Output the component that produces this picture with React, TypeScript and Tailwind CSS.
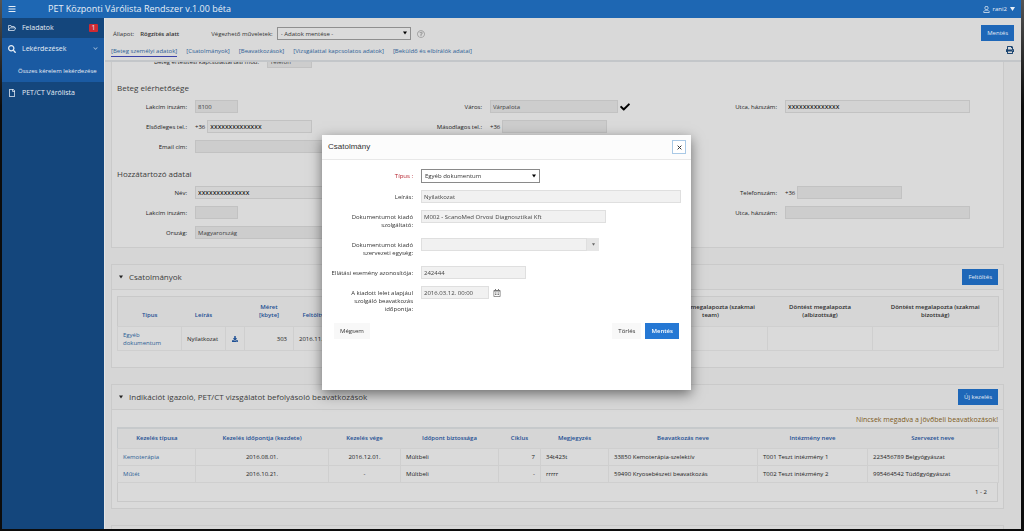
import type { ReactNode } from 'react'
import {
  FaBars,
  FaCheck,
  FaChevronDown,
  FaDownload,
  FaPrint,
  FaRegCalendarAlt,
  FaRegFile,
  FaRegFolderOpen,
  FaRegQuestionCircle,
  FaRegUser,
  FaSearch,
} from 'react-icons/fa'

/**
 * PET waiting list — request details page with the attachment dialog open.
 *
 * The page behind the dialog is painted in its dimmed colours, so there is no separate backdrop.
 */

const MASKED = 'xxxxxxxxxxxxxx'

const TABS = [
  '[Beteg személyi adatok]',
  '[Csatolmányok]',
  '[Beavatkozások]',
  '[Vizsgálattal kapcsolatos adatok]',
  '[Beküldő és elbírálók adatai]',
]

interface Column {
  label: string
  width: string
  plain?: boolean
}

const ATTACHMENT_COLUMNS: Column[] = [
  { label: 'Típus', width: 'w-[64px]' },
  { label: 'Leírás', width: 'w-[44px]' },
  { label: '', width: 'w-[19px]' },
  { label: 'Méret [kbyte]', width: 'w-[49px]' },
  { label: 'Feltöltve', width: 'w-[43px]' },
  { label: 'Feltöltötte', width: 'w-[317px]' },
  { label: 'Döntést megalapozta (szakmai team)', width: 'w-[114px]', plain: true },
  { label: 'Döntést megalapozta (albizottság)', width: 'w-[105px]', plain: true },
  { label: 'Döntést megalapozta (szakmai bizottság)', width: 'w-[126px]', plain: true },
]

const TREATMENT_COLUMNS: Column[] = [
  { label: 'Kezelés típusa', width: 'w-[78px]' },
  { label: 'Kezelés időpontja (kezdete)', width: 'w-[133px]' },
  { label: 'Kezelés vége', width: 'w-[72px]' },
  { label: 'Időpont biztossága', width: 'w-[98px]' },
  { label: 'Ciklus', width: 'w-[42px]' },
  { label: 'Megjegyzés', width: 'w-[68px]' },
  { label: 'Beavatkozás neve', width: 'w-[149px]' },
  { label: 'Intézmény neve', width: 'w-[110px]' },
  { label: 'Szervezet neve', width: 'w-[131px]' },
]

const TREATMENTS = [
  {
    type: 'Kemoterápia',
    start: '2016.08.01.',
    end: '2016.12.01.',
    certainty: 'Múltbeli',
    cycle: '7',
    note: '34t423t',
    name: '33850 Kemoterápia-szelektív',
    institute: 'T001 Teszt intézmény 1',
    organization: '223456789 Belgyógyászat',
  },
  {
    type: 'Műtét',
    start: '2016.10.21.',
    end: '-',
    certainty: 'Múltbeli',
    cycle: '-',
    note: 'rrrrr',
    name: '59490 Kryosebészeti beavatkozás',
    institute: 'T002 Teszt intézmény 2',
    organization: '995464542 Tüdőgyógyászat',
  },
]

const fieldClass = 'h-[13px] border border-[#c2c2c2] bg-[#cdcdcd] px-[2px] text-[#404040]'
const maskedClass = 'h-[13px] border border-[#c2c2c2] bg-[#d3d3d3] px-[2px] text-[7px] text-black'
const dialogFieldClass = 'h-[13px] border border-[#dfdfdf] bg-[#f1f1f1] px-[2px] text-[#444]'
const primaryClass = 'h-4 shrink-0 bg-[#1e67b8] px-[6px] text-[#e3ebf4]'

function Caret({ className }: { className: string }) {
  return (
    <svg viewBox="0 0 10 8" className={className} aria-hidden="true">
      <path d="M0 0h10L5 8z" fill="currentColor" />
    </svg>
  )
}

/** Label and control in one column of the patient form. */
function Field({ id, label, children }: { id: string; label: string; children: ReactNode }) {
  return (
    <div className="flex h-[13px] items-center gap-2">
      <label htmlFor={id} className="w-[75px] shrink-0 text-right whitespace-nowrap">
        {label}
      </label>
      <div className="flex min-w-0 flex-1 items-center gap-[2px]">{children}</div>
    </div>
  )
}

interface DialogFieldProps {
  id: string
  label: string
  required?: boolean
  children: ReactNode
}

function DialogField({ id, label, required, children }: DialogFieldProps) {
  return (
    <div className="flex items-start gap-2">
      <label
        htmlFor={id}
        className={`${required ? 'text-[#b5202c]' : ''} w-[84px] shrink-0 pt-[3px] pb-[2px] text-right`}
      >
        {label}
      </label>
      <div className="flex min-w-0 flex-1 items-center">{children}</div>
    </div>
  )
}

function TableHead({ columns }: { columns: Column[] }) {
  return (
    <thead>
      <tr className="bg-[#d6d6d6]">
        {columns.map(({ label, width, plain }, idx) => (
          <th
            key={idx}
            className={`${width} ${plain ? 'text-[#2c2c2c]' : 'text-[#1d4f94]'} px-2 text-center font-semibold`}
          >
            {label}
          </th>
        ))}
      </tr>
    </thead>
  )
}

function Region({ title, action, children }: { title: string; action: string; children: ReactNode }) {
  return (
    <section className="shrink-0 border border-[#cacaca] bg-[#dadada]">
      <header className="flex h-[25px] items-center gap-[6px] border-b border-[#cacaca] bg-[#d7d7d7] pr-[5px] pl-[7px]">
        <Caret className="h-1 w-1 text-[#222]" />
        <h2 className="flex-1 text-[8px] text-[#3c3c3c]">{title}</h2>
        <button type="button" className={primaryClass}>
          {action}
        </button>
      </header>
      {children}
    </section>
  )
}

function Sidebar() {
  return (
    <nav className="w-[102px] shrink-0 bg-[#14467c] text-[7px] font-medium text-[#e6edf5]">
      <a href="#feladatok" className="flex h-5 items-center gap-[6px] px-[6px]">
        <FaRegFolderOpen className="size-2" />
        <span className="flex-1">Feladatok</span>
        <span className="flex h-2 w-[9px] items-center justify-center rounded-[1px] bg-[#cf2a32] text-[7px]">
          1
        </span>
      </a>
      <div className="bg-[#1a5aa2]">
        <a href="#lekerdezesek" className="flex h-[21px] items-center gap-[6px] px-[6px]">
          <FaSearch className="size-2" />
          <span className="flex-1">Lekérdezések</span>
          <FaChevronDown className="size-[5px] text-[#9db9d8]" />
        </a>
        <a href="#osszes" className="flex h-[23px] items-center pl-4 text-[6px] font-normal whitespace-nowrap">
          Összes kérelem lekérdezése
        </a>
      </div>
      <a href="#varolista" className="flex h-[22px] items-center gap-[6px] px-[6px]">
        <FaRegFile className="size-2" />
        PET/CT Várólista
      </a>
    </nav>
  )
}

function Toolbar() {
  return (
    <div className="flex h-[44px] shrink-0 justify-between border-b-2 border-[#c3c6c9] bg-[#d9d9d9] pr-[7px] pl-[6px]">
      <div className="flex flex-col gap-[6px] pt-[9px]">
        <div className="flex h-[13px] items-center text-[#333]">
          <span className="mr-[6px] ml-[2px]">Állapot:</span>
          <strong className="mr-8 font-semibold">Rögzítés alatt</strong>
          <label htmlFor="action" className="mr-1">
            Végezhető műveletek:
          </label>
          <div className="relative mr-[6px]">
            <select
              id="action"
              className="block h-[13px] w-[134px] appearance-none border border-[#8f8f8f] bg-[#dbdbdb] px-[3px]"
            >
              <option>- Adatok mentése -</option>
            </select>
            <Caret className="pointer-events-none absolute top-[4px] right-1 h-1 w-[4px] text-black" />
          </div>
          <FaRegQuestionCircle className="size-2 text-[#9a9a9a]" />
        </div>
        <div className="flex gap-[9px] text-[#2d5f96]">
          {TABS.map((tab, idx) => (
            <a
              key={tab}
              href="#"
              className={idx === 0 ? 'border-b border-[#3a42a8] leading-[10px]' : 'leading-[10px]'}
            >
              {tab}
            </a>
          ))}
        </div>
      </div>
      <div className="flex flex-col items-end gap-[5px] pt-[7px]">
        <button type="button" className={primaryClass}>
          Mentés
        </button>
        <button type="button" aria-label="Nyomtatás">
          <FaPrint className="size-2 text-[#1d4672]" />
        </button>
      </div>
    </div>
  )
}

function PatientForm() {
  return (
    <section className="-mt-[7px] flex h-[193px] shrink-0 flex-col border border-t-0 border-[#cacaca] bg-[#dadada] pr-[6px]">
      <div className="flex items-center gap-2">
        <label htmlFor="contact" className="w-[147px] text-right whitespace-nowrap">
          Beteg értesítési kapcsolattartási mód:
        </label>
        <input id="contact" readOnly defaultValue="Telefon" className={`${fieldClass} w-[45px]`} />
      </div>

      <h2 className="mt-[14px] pl-[5px] text-[8px] leading-3 text-[#3c3c3c]">Beteg elérhetősége</h2>
      <div className="mt-[6px] grid grid-cols-3 gap-y-[7px]">
        <Field id="zip" label="Lakcím irszám:">
          <input id="zip" readOnly defaultValue="8100" className={`${fieldClass} w-[43px]`} />
        </Field>
        <Field id="city" label="Város:">
          <input id="city" readOnly defaultValue="Várpalota" className={`${fieldClass} w-32`} />
          <FaCheck className="size-[10px] text-black" />
        </Field>
        <Field id="street" label="Utca, házszám:">
          <input id="street" readOnly defaultValue={MASKED} className={`${maskedClass} w-[185px]`} />
        </Field>
        <Field id="phone" label="Elsődleges tel.:">
          +36
          <input id="phone" readOnly defaultValue={MASKED} className={`${maskedClass} w-[105px]`} />
        </Field>
        <Field id="phone2" label="Másodlagos tel.:">
          +36
          <input id="phone2" readOnly className={`${fieldClass} w-[105px]`} />
        </Field>
        <div />
        <Field id="email" label="Email cím:">
          <input id="email" readOnly className={`${fieldClass} w-[185px]`} />
        </Field>
      </div>

      <h2 className="mt-[15px] pl-[5px] text-[8px] leading-3 text-[#3c3c3c]">Hozzátartozó adatai</h2>
      <div className="mt-[6px] grid grid-cols-3 gap-y-[7px]">
        <Field id="relative" label="Név:">
          <input id="relative" readOnly defaultValue={MASKED} className={`${maskedClass} w-[185px]`} />
        </Field>
        <div />
        <Field id="relative-phone" label="Telefonszám:">
          +36
          <input id="relative-phone" readOnly className={`${fieldClass} w-[105px]`} />
        </Field>
        <Field id="relative-zip" label="Lakcím irszám:">
          <input id="relative-zip" readOnly className={`${fieldClass} w-[43px]`} />
        </Field>
        <div />
        <Field id="relative-street" label="Utca, házszám:">
          <input id="relative-street" readOnly className={`${fieldClass} w-[185px]`} />
        </Field>
        <Field id="country" label="Ország:">
          <input id="country" readOnly defaultValue="Magyarország" className={`${fieldClass} w-[185px]`} />
        </Field>
      </div>
    </section>
  )
}

function Attachments() {
  return (
    <Region title="Csatolmányok" action="Feltöltés">
      <div className="px-[5px] pt-[6px] pb-4">
        <table className="w-full table-fixed border border-[#c9c9c9] leading-2 [&_td]:border [&_td]:border-[#cfcfcf] [&_th]:h-[30px] [&_th]:pb-[7px] [&_th]:align-bottom">
          <TableHead columns={ATTACHMENT_COLUMNS} />
          <tbody>
            <tr className="h-6">
              <td className="px-[5px] text-[#2d5f96]">
                <a href="#">Egyéb dokumentum</a>
              </td>
              <td className="px-[5px]">Nyilatkozat</td>
              <td>
                <button type="button" aria-label="Letöltés" className="mx-auto block">
                  <FaDownload className="size-[6px] text-[#1d4f94]" />
                </button>
              </td>
              <td className="px-[6px] text-right">303</td>
              <td className="px-[5px]">2016.11.15.</td>
              <td />
              <td />
              <td />
              <td />
            </tr>
          </tbody>
        </table>
      </div>
    </Region>
  )
}

function Treatments() {
  return (
    <Region title="Indikációt igazoló, PET/CT vizsgálatot befolyásoló beavatkozások" action="Új kezelés">
      <div className="px-[5px] pb-[6px]">
        <p className="pt-[5px] pb-[3px] text-right text-[7px] leading-[9px] text-[#7d5a1c]">
          Nincsek megadva a jövőbeli beavatkozások!
        </p>
        <table className="w-full table-fixed border border-t-2 border-[#c6c9cb] leading-2 [&_td]:border [&_td]:border-[#cfcfcf] [&_td]:px-[5px] [&_th]:h-5">
          <TableHead columns={TREATMENT_COLUMNS} />
          <tbody>
            {TREATMENTS.map((row) => (
              <tr key={row.type} className="h-[17px]">
                <td className="text-[#2d5f96]">
                  <a href="#">{row.type}</a>
                </td>
                <td className="text-center">{row.start}</td>
                <td className="text-center">{row.end}</td>
                <td>{row.certainty}</td>
                <td className="text-right">{row.cycle}</td>
                <td>{row.note}</td>
                <td>{row.name}</td>
                <td>{row.institute}</td>
                <td>{row.organization}</td>
              </tr>
            ))}
          </tbody>
        </table>
        <div className="flex h-[19px] items-center justify-end border border-t-0 border-[#c9c9c9] pr-[10px]">
          1 - 2
        </div>
      </div>
    </Region>
  )
}

function AttachmentDialog() {
  return (
    <div className="fixed inset-0 flex items-center justify-center pr-[11px] pb-[6px]">
      <div
        role="dialog"
        aria-labelledby="dialog-title"
        className="flex h-[255px] w-[369px] flex-col bg-white text-[#333] shadow-[0_4px_12px_rgba(0,0,0,0.5)]"
      >
        <header className="flex h-[25px] shrink-0 items-center justify-between border-b border-[#e8e8e8] bg-[#fcfcfc] pr-[5px] pl-[6px]">
          <h2 id="dialog-title" className="font-['Liberation_Sans'] text-[8px]">
            Csatolmány
          </h2>
          <button
            type="button"
            aria-label="Bezárás"
            className="flex h-[14px] w-[14px] items-center justify-center border border-[#a9c9e6] bg-white"
          >
            <svg viewBox="0 0 8 8" className="size-[5px] stroke-[#333]" aria-hidden="true">
              <path d="M1 1l6 6M7 1L1 7" strokeWidth="1.6" />
            </svg>
          </button>
        </header>

        <form className="flex flex-col px-[7px] pt-[9px]">
          <div className="flex flex-col gap-[7px] leading-2">
            <DialogField id="type" label="Típus :" required>
              <div className="relative">
                <select
                  id="type"
                  className="block h-[14px] w-[119px] appearance-none border border-[#8a8a8a] bg-white px-[3px] text-[#333]"
                >
                  <option>Egyéb dokumentum</option>
                </select>
                <Caret className="pointer-events-none absolute top-[5px] right-1 h-1 w-[4px] text-black" />
              </div>
            </DialogField>
            <DialogField id="description" label="Leírás:">
              <input id="description" readOnly defaultValue="Nyilatkozat" className={`${dialogFieldClass} w-[260px]`} />
            </DialogField>
            <DialogField id="provider" label="Dokumentumot kiadó szolgáltató:">
              <input
                id="provider"
                readOnly
                defaultValue="M002 - ScanoMed Orvosi Diagnosztikai Kft"
                className={`${dialogFieldClass} w-[185px]`}
              />
            </DialogField>
            <DialogField id="unit" label="Dokumentumot kiadó szervezeti egység:">
              <input id="unit" readOnly className={`${dialogFieldClass} w-[166px]`} />
              <button
                type="button"
                aria-label="Szervezeti egység választása"
                className="flex h-[13px] w-3 items-center justify-center bg-[#e6e6e6]"
              >
                <Caret className="h-[3px] w-[3px] text-[#666]" />
              </button>
            </DialogField>
            <DialogField id="event" label="Ellátási esemény azonosítója:">
              <input id="event" readOnly defaultValue="242444" className={`${dialogFieldClass} w-[105px]`} />
            </DialogField>
            <DialogField id="date" label="A kiadott lelet alapjául szolgáló beavatkozás időpontja:">
              <input id="date" readOnly defaultValue="2016.03.12. 00:00" className={`${dialogFieldClass} w-[68px]`} />
              <button type="button" aria-label="Naptár" className="ml-1">
                <FaRegCalendarAlt className="size-2 text-[#777]" />
              </button>
            </DialogField>
          </div>

          <div className="mt-2 flex items-center gap-1 px-[5px]">
            <button type="button" className="h-4 bg-[#f8f8f8] px-[6px]">
              Mégsem
            </button>
            <button type="button" className="ml-auto h-4 bg-[#f8f8f8] px-[6px]">
              Törlés
            </button>
            <button type="submit" className="h-4 bg-[#2578d4] px-[6px] font-semibold text-white">
              Mentés
            </button>
          </div>
        </form>
      </div>
    </div>
  )
}

export default function App() {
  return (
    <div className="flex h-screen bg-[#0c0c0c] bg-linear-to-b from-[#555] from-0% to-[#0c0c0c] to-20% pr-[3px] pb-[2px] pl-[2px] font-['Open_Sans','Noto_Sans',sans-serif] text-[6px] leading-2 text-[#222]">
      <div className="flex min-w-0 flex-1 flex-col overflow-hidden bg-[#d6d6d6]">
        <header className="flex h-[18px] shrink-0 items-center bg-[#1e67b3] px-[6px] text-[#e8eff7]">
          <button type="button" aria-label="Menü">
            <FaBars className="size-2" />
          </button>
          <h1 className="ml-8 flex-1 text-[9px] leading-3">PET Központi Várólista Rendszer v.1.00 béta</h1>
          <button type="button" className="flex items-center gap-[3px]">
            <FaRegUser className="size-[7px]" />
            rani2
            <Caret className="h-1 w-[5px]" />
          </button>
        </header>
        <div className="flex min-h-0 flex-1">
          <Sidebar />
          <main className="flex min-w-0 flex-1 flex-col border-l border-[#e4e4e4]">
            <Toolbar />
            <div className="flex min-h-0 flex-1 flex-col gap-4 overflow-hidden pr-[17px] pl-[6px]">
              <PatientForm />
              <Attachments />
              <Treatments />
              <div className="h-8 shrink-0 border border-[#cacaca] bg-[#d7d7d7]" />
            </div>
          </main>
        </div>
      </div>
      <AttachmentDialog />
    </div>
  )
}
